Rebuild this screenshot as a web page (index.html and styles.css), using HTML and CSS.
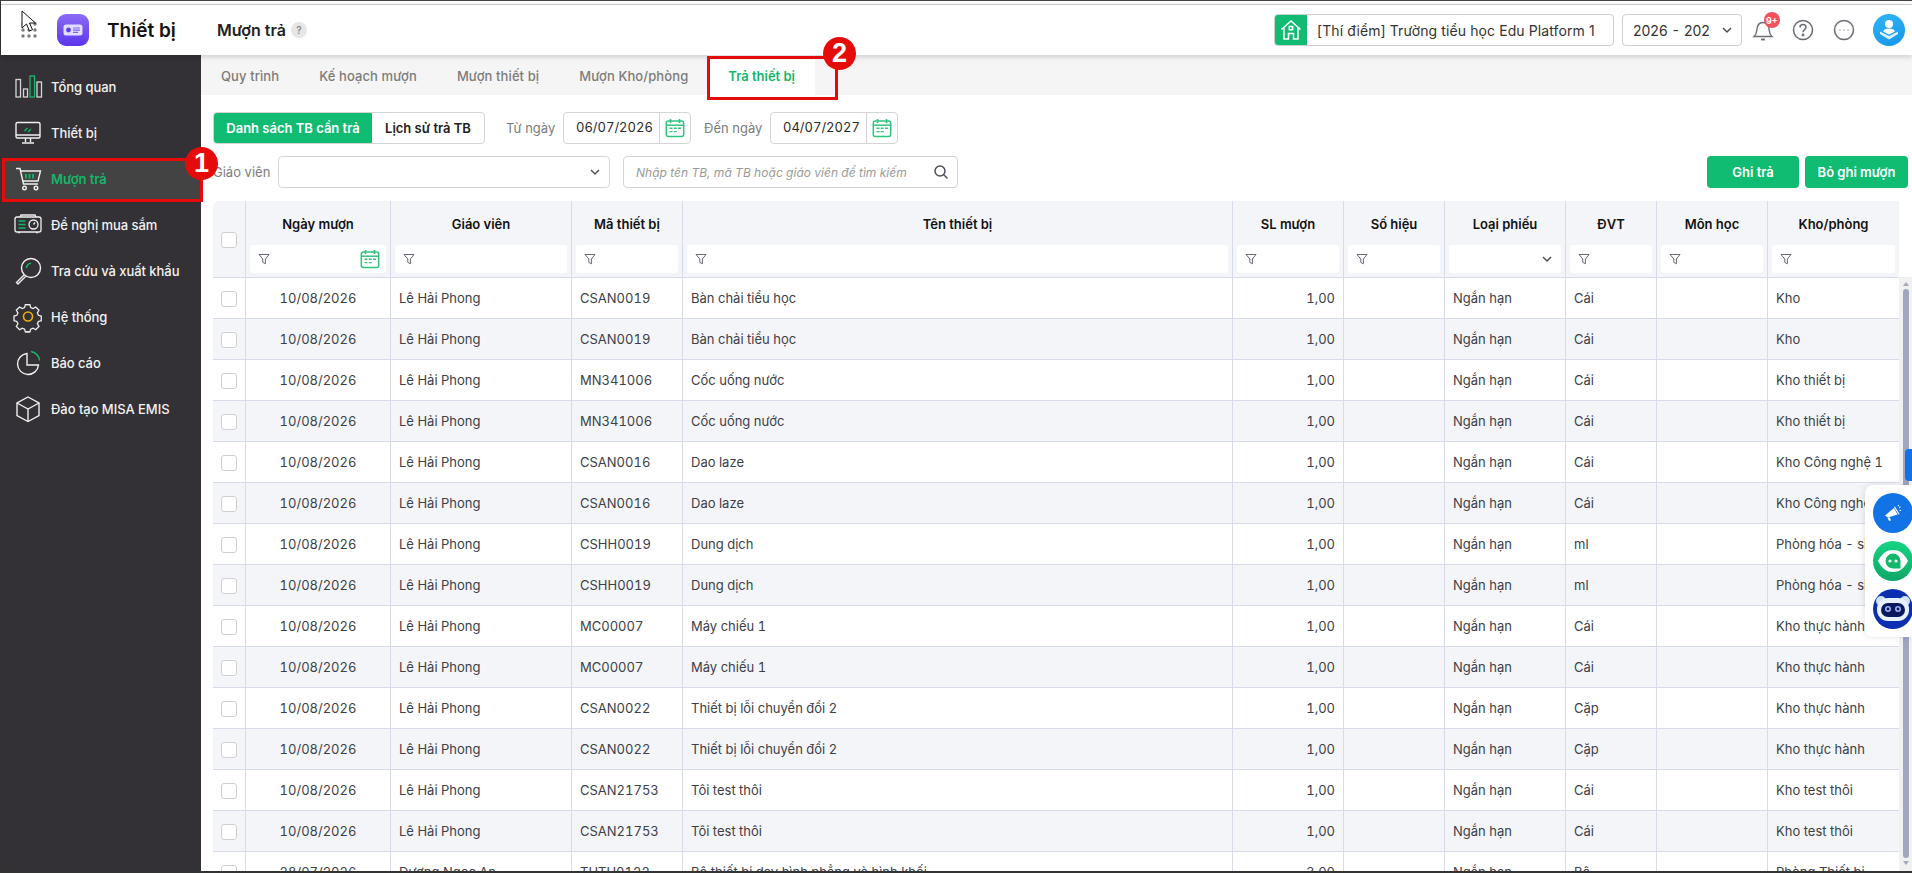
FILE: index.html
```html
<!DOCTYPE html>
<html lang="vi">
<head>
    <meta charset="utf-8">
    <title>Thiết bị | Mượn trả</title>
    <link rel="stylesheet" href="styles.css">
</head>
<body>
    <svg class="defs" width="0" height="0">
        <symbol id="i-funnel" viewBox="0 0 12 12"><path d="M1 1.500h10L7.400 6v4.800L4.800 9.400V6z" fill="none" stroke="#666a75" stroke-width="1"/></symbol>
        <symbol id="i-cal" viewBox="0 0 20 20"><path d="M5.500 1v4M14.500 1v4" stroke="#2ec47e" stroke-width="1.600" fill="none"/><rect x="1.300" y="3" width="17.400" height="15.600" rx="2" fill="none" stroke="#2ec47e" stroke-width="1.500"/><path d="M1.500 7.200h17" stroke="#2ec47e" stroke-width="1.500"/><path d="M4.500 10.200h3M8.700 10.200h3M13 10.200h3M4.500 13.600h3M8.700 13.600h3" stroke="#2ec47e" stroke-width="1.400"/></symbol>
        <symbol id="i-chev" viewBox="0 0 12 12"><path d="M2 4l4 4 4-4" fill="none" stroke="#4b4f58" stroke-width="1.500"/></symbol>
    </svg>

    <div class="app">
        <header class="topbar">
            <svg class="app-dots" width="16" height="16" viewBox="0 0 16 16" fill="#7b7b7b"><circle cx="2" cy="2" r="1.700"/><circle cx="8" cy="2" r="1.700"/><circle cx="14" cy="2" r="1.700"/><circle cx="2" cy="8" r="1.700"/><circle cx="8" cy="8" r="1.700"/><circle cx="14" cy="8" r="1.700"/><circle cx="2" cy="14" r="1.700"/><circle cx="8" cy="14" r="1.700"/><circle cx="14" cy="14" r="1.700"/></svg>
            <span class="logo">
                <svg width="20" height="14" viewBox="0 0 20 14"><rect x="0.500" y="1.500" width="19" height="11" rx="2.500" fill="#e4dcff"/><circle cx="5.500" cy="7" r="2.400" fill="#5b3fe6"/><path d="M10 5h7M10 7.200h7M10 9.400h5" stroke="#7d63f0" stroke-width="1.200"/></svg>
            </span>
            <span class="app-title">Thiết bị</span>
            <span class="page-title">Mượn trả</span>
            <span class="page-help">?</span>

            <div class="topbar-right">
                <div class="school">
                    <span class="school-icon">
                        <svg width="22" height="22" viewBox="0 0 22 22" fill="none" stroke="#fff" stroke-width="1.500"><path d="M1.500 10.500L11 2l9.500 8.500"/><path d="M4 9v11h4.500v-5.500h5V20H18V9"/><rect x="9.300" y="7.500" width="3.400" height="3.200"/></svg>
                    </span>
                    <span class="school-name">[Thí điểm] Trường tiểu học Edu Platform 1</span>
                </div>
                <div class="year">
                    <span class="year-text">2026 - 202</span>
                    <svg width="12" height="12"><use href="#i-chev"/></svg>
                </div>
                <span class="top-icon bell">
                    <svg width="24" height="26" viewBox="0 0 24 26" fill="none" stroke="#6a6d73" stroke-width="1.400"><path d="M3 19.500c1.800-1.500 2.600-3 2.800-6.500.3-5 2.700-7.500 6.200-7.500s5.900 2.500 6.200 7.500c.2 3.500 1 5 2.800 6.500z"/><path d="M10 22.500h4" stroke-width="1.800"/></svg>
                    <span class="bell-badge">9+</span>
                </span>
                <span class="top-icon help">
                    <svg width="22" height="22" viewBox="0 0 22 22" fill="none" stroke="#6a6d73" stroke-width="1.500"><circle cx="11" cy="11" r="9.500"/><path d="M8 8.500c0-1.800 1.300-3 3-3s3 1.200 3 2.800c0 2.400-3 2.400-3 4.900"/><circle cx="11" cy="16" r=".7" fill="#6a6d73"/></svg>
                </span>
                <span class="top-icon">
                    <svg width="22" height="22" viewBox="0 0 22 22" fill="none" stroke="#6a6d73" stroke-width="1.500"><circle cx="11" cy="11" r="9.500"/><path d="M6.700 11h.6M10.700 11h.6M14.700 11h.6" stroke-width="1.800"/></svg>
                </span>
                <span class="avatar">
                    <svg width="20" height="22" viewBox="0 0 20 22" fill="#fff"><circle cx="10" cy="5" r="4"/><path d="M4 12.500c.8-2.300 3-3 6-3s5.200.7 6 3l-6 3z"/><path d="M1 12.500l9 4.500 9-4.500v2.500l-9 5.500-9-5.500z" opacity=".85"/></svg>
                </span>
            </div>
        </header>

        <div class="body-wrap">
            <nav class="sidebar">
                <a class="nav-item">
                    <svg width="32" height="32" viewBox="0 0 32 32" fill="none" stroke="#d6d6d6" stroke-width="1.300"><rect x="4" y="8.500" width="4.500" height="17.500"/><rect x="11.500" y="18" width="4" height="8"/><rect x="18" y="5" width="4.500" height="21" stroke="#12b76a"/><rect x="25" y="11" width="4.500" height="15"/></svg>
                    <span>Tổng quan</span>
                </a>
                <a class="nav-item">
                    <svg width="32" height="32" viewBox="0 0 32 32" fill="none" stroke="#f0f0f0" stroke-width="1.400"><rect x="4" y="5.500" width="24" height="15.500" rx="1.500"/><path d="M4 18h24M13.500 21v4M18.500 21v4M10 26h12"/><path d="M12.500 14l3-3M16 15l3-3" stroke="#12b76a"/></svg>
                    <span>Thiết bị</span>
                </a>
                <a class="nav-item active">
                    <svg width="32" height="32" viewBox="0 0 32 32" fill="none" stroke="#f0f0f0" stroke-width="1.400"><path d="M4 5.500h4l3.500 15.500H26"/><path d="M8.500 8h20l-2.500 10H11"/><circle cx="12.500" cy="25" r="1.800"/><circle cx="24" cy="25" r="1.800"/><path d="M14 11v4.500M17.500 11v4.500M21 11v4.500" stroke="#12b76a" stroke-width="1.800"/></svg>
                    <span>Mượn trả</span>
                </a>
                <a class="nav-item">
                    <svg width="32" height="32" viewBox="0 0 32 32" fill="none" stroke="#f0f0f0" stroke-width="1.300"><rect x="3" y="8" width="26" height="15" rx="2"/><path d="M8 8l1-2h14l1 2M7 23v1.500M25 23v1.500"/><path d="M6.500 12h7M6.500 15.500h7M6.500 19h7" stroke="#12b76a" stroke-width="1.700"/><circle cx="21.500" cy="15.500" r="4.500"/><path d="M21.500 15.500l1.500-2"/></svg>
                    <span>Đề nghị mua sắm</span>
                </a>
                <a class="nav-item">
                    <svg width="32" height="32" viewBox="0 0 32 32" fill="none" stroke="#f0f0f0" stroke-width="1.400"><circle cx="19" cy="13" r="9.500"/><path d="M12 20L4.500 27.500 6 29l7.500-7.500"/><path d="M14.500 13c0-2.500 2-4.700 4.500-4.700" stroke="#12b76a" stroke-width="1.600"/></svg>
                    <span>Tra cứu và xuất khẩu</span>
                </a>
                <a class="nav-item">
                    <svg width="32" height="32" viewBox="0 0 32 32" fill="none" stroke="#f0f0f0" stroke-width="1.400"><path d="M13.500 4h5l.8 3.200 2.600 1.100 2.900-1.700 3.500 3.500-1.700 2.900 1.100 2.600 3.100.9v5l-3.100.8-1.100 2.600 1.700 2.900-3.500 3.500-2.900-1.700-2.600 1.100-.8 3H13.500" transform="translate(0 -1) scale(.92) translate(1 1)"/><path d="M18.500 4h-5l-.8 3.200-2.600 1.100-2.900-1.700-3.500 3.500 1.700 2.900-1.100 2.600-3.100.9v5l3.100.8 1.100 2.600-1.700 2.900 3.500 3.500 2.900-1.700 2.600 1.100.8 3h5" transform="translate(0 -1) scale(.92) translate(1 1)"/><circle cx="16" cy="15.500" r="4.500" stroke="#eab308" stroke-width="1.600"/></svg>
                    <span>Hệ thống</span>
                </a>
                <a class="nav-item">
                    <svg width="32" height="32" viewBox="0 0 32 32" fill="none" stroke="#f0f0f0" stroke-width="1.400"><path d="M15 6.500a10.500 10.500 0 1 0 11.500 11.500H15z"/><path d="M19 4.500a10 10 0 0 1 8.500 9" stroke="#12b76a" stroke-width="1.600"/></svg>
                    <span>Báo cáo</span>
                </a>
                <a class="nav-item">
                    <svg width="32" height="32" viewBox="0 0 32 32" fill="none" stroke="#f0f0f0" stroke-width="1.400"><path d="M16 4l11 6v12.500L16 28.500 5 22.500V10z"/><path d="M5 10l11 6 11-6M16 16v12.500"/></svg>
                    <span>Đào tạo MISA EMIS</span>
                </a>
            </nav>

            <main class="content">
                <div class="tabs">
                    <a class="tab">Quy trình</a>
                    <a class="tab">Kế hoạch mượn</a>
                    <a class="tab">Mượn thiết bị</a>
                    <a class="tab">Mượn Kho/phòng</a>
                    <a class="tab active">Trả thiết bị</a>
                </div>

                <div class="toolbar first">
                    <div class="segment">
                        <span class="seg on">Danh sách TB cần trả</span>
                        <span class="seg">Lịch sử trả TB</span>
                    </div>
                    <span class="lbl from">Từ ngày</span>
                    <div class="date"><span class="date-val">06/07/2026</span><span class="date-btn"><svg width="20" height="20"><use href="#i-cal"/></svg></span></div>
                    <span class="lbl to">Đến ngày</span>
                    <div class="date"><span class="date-val">04/07/2027</span><span class="date-btn"><svg width="20" height="20"><use href="#i-cal"/></svg></span></div>
                </div>

                <div class="toolbar second">
                    <span class="lbl teacher">Giáo viên</span>
                    <div class="select"><svg width="12" height="12"><use href="#i-chev"/></svg></div>
                    <div class="search">
                        <span class="placeholder">Nhập tên TB, mã TB hoặc giáo viên để tìm kiếm</span>
                        <svg width="16" height="16" viewBox="0 0 16 16" fill="none" stroke="#4b4f58" stroke-width="1.500"><circle cx="7" cy="7" r="5"/><path d="M10.800 10.800l3.700 3.700"/></svg>
                    </div>
                    <div class="actions">
                        <button class="btn save">Ghi trả</button>
                        <button class="btn undo">Bỏ ghi mượn</button>
                    </div>
                </div>

                <div class="table-area">
                    <div class="table-clip">
                        <table class="grid">
                            <colgroup>
                                <col class="w-check"><col class="w-date"><col class="w-teacher"><col class="w-code"><col class="w-name"><col class="w-qty"><col class="w-serial"><col class="w-type"><col class="w-unit"><col class="w-subject"><col class="w-room">
                            </colgroup>
                            <thead>
                                <tr class="head-titles">
                                    <th rowspan="2" class="check-head"><span class="cb"></span></th>
                                    <th>Ngày mượn</th><th>Giáo viên</th><th>Mã thiết bị</th><th>Tên thiết bị</th><th>SL mượn</th><th>Số hiệu</th><th>Loại phiếu</th><th>ĐVT</th><th>Môn học</th><th>Kho/phòng</th>
                                </tr>
                                <tr class="head-filters">
                                    <th><div class="filter"><svg width="12" height="12"><use href="#i-funnel"/></svg><svg class="filter-cal" width="20" height="20"><use href="#i-cal"/></svg></div></th>
                                    <th><div class="filter"><svg width="12" height="12"><use href="#i-funnel"/></svg></div></th>
                                    <th><div class="filter"><svg width="12" height="12"><use href="#i-funnel"/></svg></div></th>
                                    <th><div class="filter"><svg width="12" height="12"><use href="#i-funnel"/></svg></div></th>
                                    <th><div class="filter"><svg width="12" height="12"><use href="#i-funnel"/></svg></div></th>
                                    <th><div class="filter"><svg width="12" height="12"><use href="#i-funnel"/></svg></div></th>
                                    <th><div class="filter end"><svg width="12" height="12"><use href="#i-chev"/></svg></div></th>
                                    <th><div class="filter"><svg width="12" height="12"><use href="#i-funnel"/></svg></div></th>
                                    <th><div class="filter"><svg width="12" height="12"><use href="#i-funnel"/></svg></div></th>
                                    <th><div class="filter"><svg width="12" height="12"><use href="#i-funnel"/></svg></div></th>
                                </tr>
                            </thead>
                            <tbody>
                                <tr><td class="mid"><span class="cb"></span></td><td class="mid">10/08/2026</td><td>Lê Hải Phong</td><td>CSAN0019</td><td>Bàn chải tiểu học</td><td class="num">1,00</td><td></td><td>Ngắn hạn</td><td>Cái</td><td></td><td>Kho</td></tr>
                                <tr><td class="mid"><span class="cb"></span></td><td class="mid">10/08/2026</td><td>Lê Hải Phong</td><td>CSAN0019</td><td>Bàn chải tiểu học</td><td class="num">1,00</td><td></td><td>Ngắn hạn</td><td>Cái</td><td></td><td>Kho</td></tr>
                                <tr><td class="mid"><span class="cb"></span></td><td class="mid">10/08/2026</td><td>Lê Hải Phong</td><td>MN341006</td><td>Cốc uống nước</td><td class="num">1,00</td><td></td><td>Ngắn hạn</td><td>Cái</td><td></td><td>Kho thiết bị</td></tr>
                                <tr><td class="mid"><span class="cb"></span></td><td class="mid">10/08/2026</td><td>Lê Hải Phong</td><td>MN341006</td><td>Cốc uống nước</td><td class="num">1,00</td><td></td><td>Ngắn hạn</td><td>Cái</td><td></td><td>Kho thiết bị</td></tr>
                                <tr><td class="mid"><span class="cb"></span></td><td class="mid">10/08/2026</td><td>Lê Hải Phong</td><td>CSAN0016</td><td>Dao laze</td><td class="num">1,00</td><td></td><td>Ngắn hạn</td><td>Cái</td><td></td><td>Kho Công nghệ 1</td></tr>
                                <tr><td class="mid"><span class="cb"></span></td><td class="mid">10/08/2026</td><td>Lê Hải Phong</td><td>CSAN0016</td><td>Dao laze</td><td class="num">1,00</td><td></td><td>Ngắn hạn</td><td>Cái</td><td></td><td>Kho Công nghệ 1</td></tr>
                                <tr><td class="mid"><span class="cb"></span></td><td class="mid">10/08/2026</td><td>Lê Hải Phong</td><td>CSHH0019</td><td>Dung dịch</td><td class="num">1,00</td><td></td><td>Ngắn hạn</td><td>ml</td><td></td><td>Phòng hóa - sinh</td></tr>
                                <tr><td class="mid"><span class="cb"></span></td><td class="mid">10/08/2026</td><td>Lê Hải Phong</td><td>CSHH0019</td><td>Dung dịch</td><td class="num">1,00</td><td></td><td>Ngắn hạn</td><td>ml</td><td></td><td>Phòng hóa - sinh</td></tr>
                                <tr><td class="mid"><span class="cb"></span></td><td class="mid">10/08/2026</td><td>Lê Hải Phong</td><td>MC00007</td><td>Máy chiếu 1</td><td class="num">1,00</td><td></td><td>Ngắn hạn</td><td>Cái</td><td></td><td>Kho thực hành</td></tr>
                                <tr><td class="mid"><span class="cb"></span></td><td class="mid">10/08/2026</td><td>Lê Hải Phong</td><td>MC00007</td><td>Máy chiếu 1</td><td class="num">1,00</td><td></td><td>Ngắn hạn</td><td>Cái</td><td></td><td>Kho thực hành</td></tr>
                                <tr><td class="mid"><span class="cb"></span></td><td class="mid">10/08/2026</td><td>Lê Hải Phong</td><td>CSAN0022</td><td>Thiết bị lỗi chuyển đổi 2</td><td class="num">1,00</td><td></td><td>Ngắn hạn</td><td>Cặp</td><td></td><td>Kho thực hành</td></tr>
                                <tr><td class="mid"><span class="cb"></span></td><td class="mid">10/08/2026</td><td>Lê Hải Phong</td><td>CSAN0022</td><td>Thiết bị lỗi chuyển đổi 2</td><td class="num">1,00</td><td></td><td>Ngắn hạn</td><td>Cặp</td><td></td><td>Kho thực hành</td></tr>
                                <tr><td class="mid"><span class="cb"></span></td><td class="mid">10/08/2026</td><td>Lê Hải Phong</td><td>CSAN21753</td><td>Tôi test thôi</td><td class="num">1,00</td><td></td><td>Ngắn hạn</td><td>Cái</td><td></td><td>Kho test thôi</td></tr>
                                <tr><td class="mid"><span class="cb"></span></td><td class="mid">10/08/2026</td><td>Lê Hải Phong</td><td>CSAN21753</td><td>Tôi test thôi</td><td class="num">1,00</td><td></td><td>Ngắn hạn</td><td>Cái</td><td></td><td>Kho test thôi</td></tr>
                                <tr><td class="mid"><span class="cb"></span></td><td class="mid">28/07/2026</td><td>Dương Ngọc An</td><td>THTH0122</td><td>Bộ thiết bị dạy hình phẳng và hình khối</td><td class="num">3,00</td><td></td><td>Ngắn hạn</td><td>Bộ</td><td></td><td>Phòng Thiết bị</td></tr>
                            </tbody>
                        </table>
                    </div>
                    <div class="scrollbar">
                        <span class="arrow up"></span>
                        <span class="thumb"></span>
                        <span class="arrow down"></span>
                    </div>
                </div>
            </main>
        </div>
    </div>

    <!-- floating widgets -->
    <span class="side-tab"></span>
    <div class="widgets">
        <span class="widget blue">
            <svg width="22" height="22" viewBox="0 0 22 22" fill="#fff"><path d="M3 13.500L12 6l3.500 6.500-9.500 3z"/><path d="M5.500 16l2-.8 1.500 3-1.800.8z"/><path d="M13 4.500l4.500 7.500-1 .6L12 5z"/><path d="M16 3l1 1.500M18.500 5l-1.500 1M19 8.500h-1.500" stroke="#fff" stroke-width="1" fill="none"/></svg>
        </span>
        <span class="widget green">
            <svg width="32" height="32" viewBox="0 0 32 32"><path d="M1 16C5 8 10 5 16 5s11 3 15 11c-4 8-9 11-15 11S5 24 1 16z" fill="#fff"/><path d="M16 8.500a7.500 7.500 0 1 0 0 15h7.500V16A7.500 7.500 0 0 0 16 8.500z" fill="#12b76a"/><circle cx="13" cy="16" r="1.600" fill="#fff"/><circle cx="19" cy="16" r="1.600" fill="#fff"/></svg>
        </span>
        <span class="widget navy">
            <svg width="36" height="30" viewBox="0 0 36 30"><circle cx="6" cy="7" r="5" fill="#cfe2fb"/><circle cx="30" cy="7" r="5" fill="#cfe2fb"/><rect x="2" y="4" width="32" height="23" rx="11" fill="#e9f2ff"/><rect x="6" y="9" width="24" height="14" rx="7" fill="#0b1a5e"/><circle cx="13" cy="15" r="3" fill="#9fb4f0"/><circle cx="23" cy="15" r="3" fill="#9fb4f0"/><circle cx="13" cy="15" r="1.400" fill="#0b1a5e"/><circle cx="23" cy="15" r="1.400" fill="#0b1a5e"/></svg>
        </span>
    </div>

    <!-- tutorial marks drawn over the screenshot -->
    <span class="mark-box box-nav"></span>
    <span class="mark-box box-tab"></span>
    <span class="mark-num num-one">1</span>
    <span class="mark-num num-two">2</span>

    <svg class="cursor" width="16" height="24" viewBox="0 0 16 24"><path d="M1 1v17l4.500-4 3 7 3-1.300-3-6.700h6z" fill="#fff" stroke="#111" stroke-width="1"/></svg>
</body>
</html>
```

FILE: styles.css
```css
*, *::before, *::after { padding: 0; margin: 0; box-sizing: border-box; }
html, body { height: 100%; overflow: hidden; }
body { font-family: 'Inter', 'Noto Sans', sans-serif; font-size: 13px; color: #3d4046; background: #fff; position: relative; }
.defs { position: absolute; }

.app { height: 873px; display: flex; flex-direction: column; border-top: 1px solid #444; border-left: 1px solid #333; border-bottom: 2px solid #333; padding-top: 3px; }

/* top bar */
.topbar { height: 51px; flex: none; display: flex; align-items: center; background: #fff; border-top: 1px solid #c9c9c9; box-shadow: 0 2px 5px rgba(0,0,0,.16); position: relative; z-index: 2; }
.app-dots { margin-left: 20px; flex: none; }
.logo { width: 32px; height: 32px; margin-left: 20px; flex: none; border-radius: 9px; background: linear-gradient(180deg, #8a6cf5, #5a35ec); display: flex; align-items: center; justify-content: center; }
.app-title { width: 110px; margin-left: 18px; font-size: 19px; font-weight: 600; color: #111; }
.page-title { font-size: 16px; font-weight: 600; color: #222; }
.page-help { width: 16px; height: 16px; margin-left: 5px; border-radius: 50%; background: #e6e6e6; color: #888; font-size: 10px; font-weight: 600; display: flex; align-items: center; justify-content: center; }
.topbar-right { margin-left: auto; display: flex; align-items: center; }
.school { width: 340px; height: 32px; display: flex; align-items: center; border: 1px solid #cfcfcf; border-radius: 4px; overflow: hidden; }
.school-icon { width: 32px; height: 32px; background: #0fbc72; display: flex; align-items: center; justify-content: center; flex: none; }
.school-name { margin-left: 10px; font-size: 14px; letter-spacing: .1px; color: #333; white-space: nowrap; }
.year { width: 120px; height: 32px; margin-left: 8px; padding: 0 8px 0 10px; display: flex; align-items: center; justify-content: space-between; border: 1px solid #cfcfcf; border-radius: 4px; font-size: 14px; color: #333; }
.year-text { white-space: pre; word-spacing: 1px; }
.top-icon { width: 24px; height: 32px; margin-left: 17px; display: flex; align-items: center; justify-content: center; }
.top-icon.help { margin-left: 16px; }
.bell { position: relative; margin-left: 9px; }
.bell-badge { position: absolute; top: -2px; left: 13px; width: 16px; height: 16px; border-radius: 50%; background: #f4515a; color: #fff; font-size: 9px; font-weight: 700; display: flex; align-items: center; justify-content: center; }
.avatar { width: 32px; height: 32px; margin: 0 7px 0 17px; border-radius: 50%; background: linear-gradient(160deg, #2fb6f4, #1595ea); display: flex; align-items: center; justify-content: center; }

.body-wrap { flex: 1; display: flex; min-height: 0; }

/* left menu */
.sidebar { width: 200px; flex: none; background: #333135; padding-top: 9px; }
.nav-item { height: 42px; margin: 2px 0 4px 3px; padding-left: 7px; display: flex; align-items: center; gap: 7px; border-left: 1px solid transparent; color: #f2f2f2; font-size: 13px; font-weight: 500; letter-spacing: -.05px; white-space: nowrap; }
.nav-item svg { flex: none; }
.nav-item.active { background: #434343; border-left-color: #12b76a; color: #12b76a; font-weight: 600; }

/* right side */
.content { flex: 1; min-width: 0; display: flex; flex-direction: column; }
.tabs { height: 40px; flex: none; display: flex; background: #f5f5f5; }
.tab { padding: 2px 20px 0; display: flex; align-items: center; font-size: 13px; font-weight: 500; letter-spacing: .1px; color: #7c7c7c; white-space: nowrap; }
.tab.active { background: #fff; color: #12b76a; font-weight: 600; letter-spacing: 0; margin-left: 0; }

.toolbar { flex: none; display: flex; align-items: center; padding-left: 12px; }
.toolbar.first { height: 33px; margin-top: 16px; }
.toolbar.second { height: 32px; margin-top: 12px; padding-right: 4px; }
.segment { width: 272px; height: 32px; display: flex; border: 1px solid #d4d4d4; border-radius: 4px; overflow: hidden; font-size: 13px; font-weight: 600; color: #222; }
.seg { flex: 1; display: flex; align-items: center; justify-content: center; white-space: nowrap; }
.seg.on { flex: none; width: 158px; background: #0fbc72; color: #fff; }
.lbl { color: #7c7c7c; white-space: nowrap; }
.lbl.from { margin-left: 21px; width: 57px; }
.lbl.to { margin-left: 13px; width: 66px; }
.lbl.teacher { width: 65px; }
.date { width: 128px; height: 32px; display: flex; align-items: center; border: 1px solid #d4d4d4; border-radius: 4px; color: #2a2a2a; }
.date-val { flex: 1; padding-left: 12px; font-variant-numeric: tabular-nums; padding-bottom: 1px; }
.date-btn { width: 31px; height: 100%; border-left: 1px solid #d4d4d4; display: flex; align-items: center; justify-content: center; }
.select { width: 332px; height: 32px; padding-right: 8px; display: flex; align-items: center; justify-content: flex-end; border: 1px solid #d4d4d4; border-radius: 4px; }
.search { width: 335px; height: 32px; margin-left: 13px; padding: 0 8px 0 12px; display: flex; align-items: center; justify-content: space-between; border: 1px solid #d4d4d4; border-radius: 4px; }
.placeholder { font-size: 12px; font-style: italic; color: #9a9a9a; white-space: nowrap; }
.actions { margin-left: auto; display: flex; gap: 6px; }
.btn { height: 32px; border: none; border-radius: 4px; background: #0fbc72; color: #fff; font-family: inherit; font-size: 13px; font-weight: 600; }
.btn.save { width: 92px; }
.btn.undo { width: 103px; }

/* table */
.table-area { flex: 1; min-height: 0; margin-top: 13px; padding-left: 12px; display: flex; }
.table-clip { flex: 1; min-width: 0; overflow: hidden; }
.grid { width: 1686px; table-layout: fixed; border-collapse: separate; border-spacing: 0; }
.w-check { width: 33px; } .w-date { width: 145px; } .w-teacher { width: 181px; } .w-code { width: 111px; } .w-name { width: 550px; } .w-qty { width: 111px; }
.w-serial { width: 101px; } .w-type { width: 121px; } .w-unit { width: 91px; } .w-subject { width: 111px; } .w-room { width: 131px; }
.grid th { background: #f4f5f9; border-right: 1px solid #d7dae8; font-weight: 600; color: #111; white-space: nowrap; }
.grid th:last-child { border-right: none; }
.head-titles th { height: 44px; vertical-align: middle; padding-top: 1px; }
.head-titles th:first-child { border-top-left-radius: 6px; }
.head-filters th { height: 33px; vertical-align: top; padding: 0 4px; border-bottom: 1px solid #d7dae8; }
.check-head { border-bottom: 1px solid #d7dae8; }
.filter { height: 28px; padding: 0 8px; background: #fff; border-radius: 3px; display: flex; align-items: center; justify-content: space-between; }
.filter.end { justify-content: flex-end; }
.filter svg { flex: none; }
.filter-cal { margin-right: -2px; }
.grid td { height: 41px; padding: 0 8px; border-right: 1px solid #d7dae8; border-bottom: 1px solid #d7dae8; font-variant-numeric: tabular-nums; white-space: nowrap; overflow: hidden; vertical-align: middle; }
.grid td:last-child { border-right: none; }
.grid tbody tr:nth-child(even) td { background: #f4f5f9; }
.grid td.mid { text-align: center; padding: 0; }
.grid td.num { text-align: right; }
.cb { display: inline-block; width: 16px; height: 16px; background: #fff; border: 1px solid #cfcfcf; border-radius: 3px; vertical-align: middle; }

.scrollbar { width: 13px; flex: none; margin-top: 76px; background: #f1f1f1; display: flex; flex-direction: column; align-items: center; padding-top: 5px; }
.arrow { width: 0; height: 0; border-left: 3px solid transparent; border-right: 3px solid transparent; flex: none; }
.arrow.up { border-bottom: 4px solid #a5a9b8; }
.arrow.down { border-top: 4px solid #a5a9b8; margin-bottom: 6px; }
.thumb { flex: 1; width: 6px; margin: 3px 0; background: #9fa6bd; border-radius: 3px; }

/* floating widgets */
.side-tab { position: absolute; left: 1905px; top: 449px; width: 7px; height: 32px; background: #1273e6; border-radius: 4px 0 0 4px; }
.widgets { position: absolute; left: 1865px; top: 485px; width: 47px; height: 152px; padding: 8px 0 0 8px; background: #fff; border-radius: 8px 0 0 8px; box-shadow: -1px 0 6px rgba(0,0,0,.1); display: flex; flex-direction: column; gap: 8px; overflow: hidden; }
.widget { width: 40px; height: 40px; flex: none; border-radius: 50%; display: flex; align-items: center; justify-content: center; }
.widget.blue { background: #1273e6; }
.widget.green { background: linear-gradient(180deg, #16d484, #0ea765); }
.widget.navy { background: #0b2fb0; }

/* tutorial marks */
.mark-box { position: absolute; z-index: 5; border: 3px solid #e60b0b; }
.box-nav { left: 2px; top: 158px; width: 201px; height: 44px; }
.box-tab { left: 707px; top: 56px; width: 131px; height: 44px; }
.mark-num { position: absolute; z-index: 6; width: 33px; height: 33px; border-radius: 50%; background: #e60b0b; color: #fff; font-family: 'Liberation Sans', sans-serif; font-size: 27px; font-weight: 700; display: flex; align-items: center; justify-content: center; }
.num-one { left: 185px; top: 147px; }
.num-two { left: 823px; top: 37px; }
.cursor { position: absolute; z-index: 6; left: 21px; top: 10px; }
```
